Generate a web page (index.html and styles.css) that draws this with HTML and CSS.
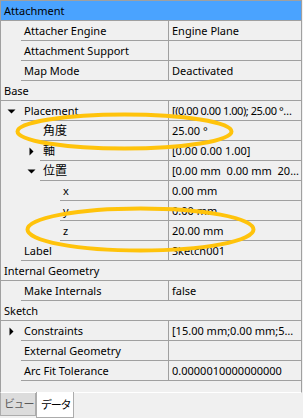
FILE: index.html
```html
<!DOCTYPE html>
<html lang="ja">

<head>
  <meta charset="UTF-8">
  <meta name="viewport" content="width=device-width, initial-scale=1.0">
  <title>Property View</title>
  <link rel="stylesheet" href="styles.css">
</head>

<body>
  <div class="panel">
    <div class="grp sel">Attachment</div>
    <div class="row l0"><span class="ind"></span><div class="cells"><span class="name">Attacher Engine</span><span class="value">Engine Plane</span></div></div>
    <div class="row l0"><span class="ind"></span><div class="cells"><span class="name">Attachment Support</span><span class="value"></span></div></div>
    <div class="row l0"><span class="ind"></span><div class="cells"><span class="name">Map Mode</span><span class="value">Deactivated</span></div></div>
    <div class="grp">Base</div>
    <div class="row l0">
      <span class="ind"><svg class="arrow" viewBox="0 0 9 9"><polygon points="0.5,2.5 8.5,2.5 4.5,6.5" /></svg></span>
      <div class="cells"><span class="name">Placement</span><span class="value tight">[(0.00 0.00 1.00); 25.00 °…</span></div>
    </div>
    <div class="row l1"><span class="ind"></span><div class="cells"><span class="name jp">角度</span><span class="value">25.00 °</span></div></div>
    <div class="row l1">
      <span class="ind"><svg class="arrow" viewBox="0 0 9 9"><polygon points="2.5,0.5 6.5,4.5 2.5,8.5" /></svg></span>
      <div class="cells"><span class="name jp">軸</span><span class="value">[0.00 0.00 1.00]</span></div>
    </div>
    <div class="row l1">
      <span class="ind"><svg class="arrow" viewBox="0 0 9 9"><polygon points="0.5,2.5 8.5,2.5 4.5,6.5" /></svg></span>
      <div class="cells"><span class="name jp">位置</span><span class="value">[0.00 mm  0.00 mm  20…</span></div>
    </div>
    <div class="row l2"><span class="ind"></span><div class="cells"><span class="name">x</span><span class="value">0.00 mm</span></div></div>
    <div class="row l2"><span class="ind"></span><div class="cells"><span class="name">y</span><span class="value">0.00 mm</span></div></div>
    <div class="row l2"><span class="ind"></span><div class="cells"><span class="name">z</span><span class="value">20.00 mm</span></div></div>
    <div class="row l0"><span class="ind"></span><div class="cells"><span class="name">Label</span><span class="value">Sketch001</span></div></div>
    <div class="grp">Internal Geometry</div>
    <div class="row l0"><span class="ind"></span><div class="cells"><span class="name">Make Internals</span><span class="value">false</span></div></div>
    <div class="grp">Sketch</div>
    <div class="row l0">
      <span class="ind"><svg class="arrow" viewBox="0 0 9 9"><polygon points="2.5,0.5 6.5,4.5 2.5,8.5" /></svg></span>
      <div class="cells"><span class="name">Constraints</span><span class="value">[15.00 mm;0.00 mm;5…</span></div>
    </div>
    <div class="row l0"><span class="ind"></span><div class="cells"><span class="name">External Geometry</span><span class="value"></span></div></div>
    <div class="row l0"><span class="ind"></span><div class="cells"><span class="name">Arc Fit Tolerance</span><span class="value">0.0000010000000000</span></div></div>
  </div>
  <div class="tabs">
    <span class="tab">ビュー</span>
    <span class="tab on">データ</span>
  </div>
  <svg class="marks" viewBox="0 0 303 418">
    <ellipse cx="124.5" cy="131.5" rx="107" ry="17" />
    <ellipse cx="140.5" cy="229.5" rx="113" ry="21" />
  </svg>
</body>

</html>
```

FILE: styles.css
```css
*,
*::before,
*::after {
  box-sizing: border-box;
}
body {
  width: 303px;
  height: 418px;
  margin: 0;
  overflow: hidden;
  position: relative;
  background: #f0f0f0;
  color: #000;
  font-family: "Noto Sans", "Noto Sans CJK JP", sans-serif;
  font-size: 11px;
  line-height: 19px;
}
.panel {
  width: 302px;
  height: 393px;
  border: 1px solid #a0a0a0;
  border-bottom-color: #fff;
}
.grp {
  height: 20px;
  padding-left: 3px;
  border-bottom: 1px solid #a0a0a0;
  white-space: nowrap;
}
.grp.sel {
  background: #4aa3ff;
}
.row {
  display: flex;
  height: 20px;
}
.ind {
  flex: none;
  display: flex;
  align-items: center;
}
.arrow {
  width: 9px;
  height: 9px;
  fill: #000;
}
.cells {
  flex: 1;
  display: flex;
  min-width: 0;
  border-bottom: 1px solid #a0a0a0;
}
.name {
  flex: none;
  padding-left: 3px;
  white-space: nowrap;
  overflow: hidden;
}
.value {
  flex: 1;
  min-width: 0;
  padding-left: 3px;
  border-left: 1px solid #a0a0a0;
  white-space: pre;
  overflow: hidden;
  text-overflow: ellipsis;
}
.value.tight {
  letter-spacing: -0.45px;
}
.jp {
  font-size: 12px;
}
.l0 .ind {
  width: 20px;
  padding-left: 6px;
}
.l0 .name {
  width: 147px;
}
.l1 .ind {
  width: 39px;
  padding-left: 26px;
}
.l1 .name {
  width: 128px;
}
.l2 .ind {
  width: 59px;
}
.l2 .name {
  width: 108px;
}
.tabs {
  display: flex;
  align-items: flex-start;
  margin-top: -1px;
}
.tab {
  height: 23px;
  width: 36px;
  margin-top: 1px;
  padding-left: 3px;
  border: 1px solid #acacac;
  border-top: 0;
  background: #dcdcdc;
  color: #5a5a5a;
  font-size: 11px;
  letter-spacing: -1.3px;
  line-height: 21px;
  white-space: nowrap;
}
.tab.on {
  width: 38px;
  height: 26px;
  margin-top: 0;
  padding-left: 4px;
  background: #fff;
  color: #000;
  line-height: 26px;
}
.marks {
  position: absolute;
  top: 0;
  left: 0;
  width: 303px;
  height: 418px;
  pointer-events: none;
}
.marks ellipse {
  fill: none;
  stroke: #ffc30b;
  stroke-width: 4;
}
```
